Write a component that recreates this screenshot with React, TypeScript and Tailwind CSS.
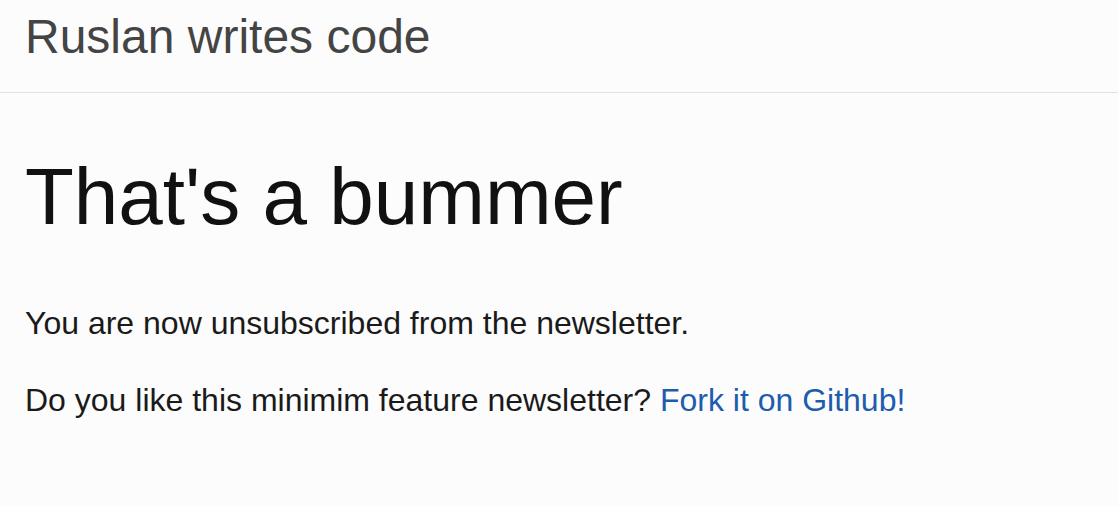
import React from 'react';

const font = { fontFamily: '"Liberation Sans", Arial, sans-serif' };

export default function App() {
  return (
    <div className="min-h-[506px] bg-[#fcfcfc] text-[#1a1a1a]" style={font}>
      {/* Site header */}
      <header className="h-[93px] border-b border-[#e3e3e3] px-[25px]">
        <a href="#" className="block pt-[9px] text-[48px] leading-[56px] text-[#444]">
          Ruslan writes code
        </a>
      </header>

      <main className="px-[25px]">
        <h1 className="mt-[58px] text-[80px] leading-[92px] text-[#111]">That's a bummer</h1>
        <p className="mt-[60px] text-[32px] leading-[40px]">You are now unsubscribed from the newsletter.</p>
        <p className="mt-[37px] text-[32px] leading-[40px]">
          Do you like this minimim feature newsletter?{' '}
          <a href="#" className="text-[#1d5cae]">Fork it on Github!</a>
        </p>
      </main>
    </div>
  );
}
